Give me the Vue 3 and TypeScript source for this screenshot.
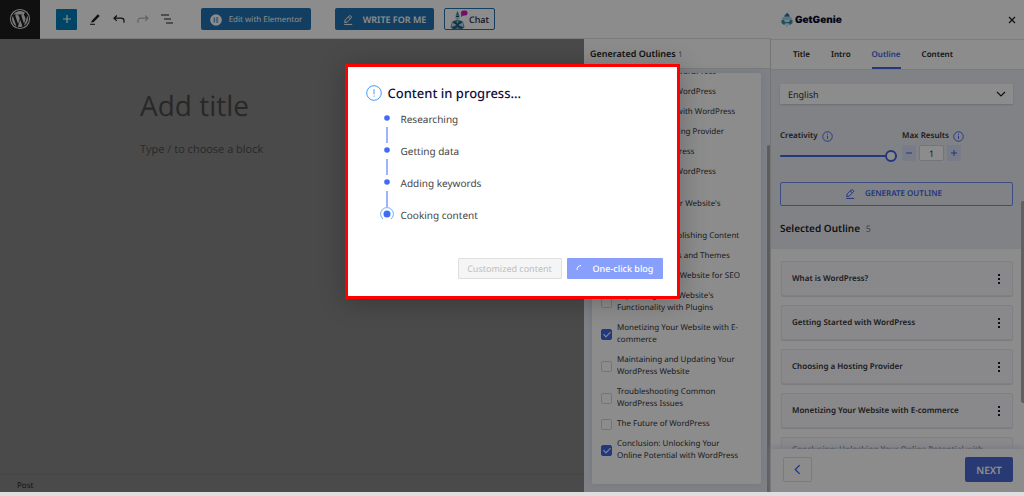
<script setup lang="ts">
import { ref } from 'vue'

interface Outline {
  text: string
  checked: boolean
}

const outlines = ref<Outline[]>([
  { text: 'Introduction to WordPress', checked: false },
  { text: 'Understanding WordPress', checked: true },
  { text: 'Getting Started with WordPress', checked: true },
  { text: 'Choosing a Hosting Provider', checked: true },
  { text: 'Installing WordPress', checked: false },
  { text: 'Understanding WordPress Dashboard', checked: false },
  { text: "Customizing Your Website's Appearance", checked: false },
  { text: 'Creating and Publishing Content', checked: false },
  { text: 'Installing Plugins and Themes', checked: false },
  { text: 'Optimizing Your Website for SEO', checked: false },
  { text: "Expanding Your Website's Functionality with Plugins", checked: false },
  { text: 'Monetizing Your Website with E-commerce', checked: true },
  { text: 'Maintaining and Updating Your WordPress Website', checked: false },
  { text: 'Troubleshooting Common WordPress Issues', checked: false },
  { text: 'The Future of WordPress', checked: false },
  { text: 'Conclusion: Unlocking Your Online Potential with WordPress', checked: true },
])

const selected: string[] = [
  'What is WordPress?',
  'Getting Started with WordPress',
  'Choosing a Hosting Provider',
  'Monetizing Your Website with E-commerce',
  'Conclusion: Unlocking Your Online Potential with WordPress',
]

const tabs: string[] = ['Title', 'Intro', 'Outline', 'Content']
const activeTab = ref('Outline')
const steps: string[] = ['Researching', 'Getting data', 'Adding keywords', 'Cooking content']
const creativity = ref(100)
const maxResults = ref(1)
</script>

<template>
  <div class="app">
    <div class="stage">
      <div class="workspace">
        <header class="topbar">
          <a class="wp" href="#" aria-label="WordPress">
            <svg viewBox="0 0 24 24" width="22" height="22" fill="#dcdcdc">
              <path d="M12 1a11 11 0 1 0 0 22 11 11 0 0 0 0-22zm0 1.2a9.8 9.8 0 1 1 0 19.6 9.8 9.8 0 0 1 0-19.6z" />
              <path d="M3.300 12c0 3.400 2 6.400 4.900 7.800L4.100 8.400A8.700 8.700 0 0 0 3.300 12zm14.600-.4c0-1.100-.4-1.800-.7-2.400-.5-.7-.9-1.300-.9-2.100 0-.8.6-1.600 1.500-1.600h.1A8.700 8.700 0 0 0 4.700 7.200h.6c.9 0 2.300-.1 2.300-.1.500 0 .5.700.1.700 0 0-.5.1-1 .1l3.200 9.500 1.900-5.800L10.400 7.900c-.5 0-.9-.1-.9-.1-.5 0-.4-.7 0-.7 0 0 1.500.1 2.300.1.900 0 2.300-.1 2.300-.1.500 0 .5.700.1.700 0 0-.5.1-1 .1l3.200 9.400.9-2.900c.4-1.200.6-2.100.6-2.800zm-5.700 1.200-2.600 7.600a8.700 8.700 0 0 0 5.300-.1l-.1-.1zm7.500-4.900c.1 1.200-.1 2.300-.6 3.600l-2.700 7.900A8.700 8.700 0 0 0 19.700 7.900z" />
            </svg>
          </a>
          <div class="tools">
            <button class="add" aria-label="Add block">
              <svg viewBox="0 0 12 12" width="12" height="12" stroke="#fff" stroke-width="1.200"><path d="M6 2v8M2 6h8" /></svg>
            </button>
            <button class="tool" aria-label="Edit">
              <svg viewBox="0 0 12 12" width="12" height="12"><path d="M2.800 7.800 8.800 1.200 10.700 2.900 4.800 9 2 9.700z" fill="#1e1e1e" /><path d="M1 11.300h5" stroke="#1e1e1e" stroke-width="1" /></svg>
            </button>
            <button class="tool" aria-label="Undo">
              <svg viewBox="0 0 12 12" width="12" height="12" fill="none" stroke="#1e1e1e" stroke-width="1.200"><path d="M3.800 2.500 1 5.200l2.800 2.700M1.200 5.200H8c2 0 3 1 3 2.500v2" /></svg>
            </button>
            <button class="tool" aria-label="Redo">
              <svg viewBox="0 0 12 12" width="12" height="12" fill="none" stroke="#b4b4b4" stroke-width="1.200"><path d="M8.200 2.500 11 5.200 8.200 7.900M10.800 5.200H4c-2 0-3 1-3 2.500v2" /></svg>
            </button>
            <button class="tool" aria-label="List view">
              <svg viewBox="0 0 12 12" width="12" height="12" stroke="#1e1e1e" stroke-width="1.200"><path d="M0 2h8M3 6h7M5 10h7" /></svg>
            </button>
          </div>
          <button class="blue elementor">
            <svg viewBox="0 0 12 12" width="12" height="12"><circle cx="6" cy="6" r="5.800" fill="#fff" /><path d="M4.200 3.500v5M5.800 4h2.500M5.800 6h2.500M5.800 8h2.500" stroke="#2271b1" stroke-width="1" /></svg>
            Edit with Elementor
          </button>
          <button class="blue write">
            <svg viewBox="0 0 12 12" width="10" height="10" fill="none" stroke="#fff" stroke-width="1.200"><path d="M2.500 6 7.500 1.200a1.200 1.200 0 0 1 1.800 0l.6.600a1.200 1.200 0 0 1 0 1.800L5 8.500 2 9zM1.500 11.300h9.500M6.500 2.300l2.300 2.400" /></svg>
            WRITE FOR ME
          </button>
          <button class="chat">
            <svg viewBox="0 0 18 20" width="18" height="20">
              <path d="M5.800 5.500 7.500.800 9.300 5.500 9 8H6z" fill="#3c86a3" />
              <path d="M5.500 5.500h4v3.500l-2 1.500-2-1.500z" fill="#a5cfdd" />
              <path d="M6 6.500h3" stroke="#184e6c" />
              <path d="M2 12c2-2.500 9-2.500 11 0l1.500 5c-2 3-12 3-14 0z" fill="#347999" />
              <path d="m2 12.500 4.500 2.500L1.500 17zm11 0L8.500 15l5 2z" fill="#c6e0e8" />
              <path d="M4 11 7.500 15.500 11 11M2.500 18.500l5-2.500 5 2.500" stroke="#154d6c" fill="none" />
              <path d="m6.500 11.500 1 1.500 1-1.500zM6 18.500l1.500-1 1.500 1z" fill="#e2f1f5" />
              <rect x="11" y=".5" width="6.500" height="5" rx="2.300" fill="#d717bd" />
              <path d="m11.500 3.500-.5 3.500 3-2z" fill="#d717bd" />
            </svg>
            Chat
          </button>
        </header>

        <div class="middle">
          <main class="canvas">
            <div class="post">
              <input class="title" aria-label="Add title" placeholder="Add title">
              <input class="block" aria-label="Block" placeholder="Type / to choose a block">
            </div>
            <footer class="crumb">Post</footer>
          </main>
          <section class="generated">
            <h2 class="gen-head">Generated Outlines <small>1</small></h2>
            <div class="gen-body">
              <ul class="gen-list">
                <li v-for="(o, i) in outlines" :key="i">
                  <input :id="`o${i}`" v-model="o.checked" type="checkbox" class="check">
                  <label :for="`o${i}`">{{ o.text }}</label>
                </li>
              </ul>
              <div class="gen-scroll"></div>
            </div>
          </section>
        </div>
      </div>

      <aside class="panel">
        <header class="panel-head">
          <div class="brand">
            <svg viewBox="0 0 12 16" width="12" height="16">
              <path d="M3.500 5C3 2.500 5 3 6 .5 7 2 9 2 8.500 5z" fill="#247ca3" />
              <path d="M1 6c2-2 8-2 10 0l-.5 2h-9z" fill="#a6d6e6" />
              <path d="M.5 8h11v3L9 13H3L.5 11z" fill="#3b8cae" />
              <path d="M3 8h6l-1 2H4zM3 12l3-1 3 1-3 3.500z" fill="#d8eef4" />
            </svg>
            <strong>GetGenie</strong>
          </div>
          <button class="close" aria-label="Close">
            <svg viewBox="0 0 8 8" width="8" height="8" stroke="#1e1e1e" stroke-width="1.200"><path d="m1 1 6 6M7 1 1 7" /></svg>
          </button>
        </header>
        <nav class="tabs">
          <button v-for="t in tabs" :key="t" :class="{ active: t === activeTab }" @click="activeTab = t">{{ t }}</button>
        </nav>
        <div class="panel-body">
          <div class="settings">
            <div class="select-wrap">
              <select aria-label="Language" class="language"><option>English</option></select>
              <svg viewBox="0 0 10 6" width="10" height="6" fill="none" stroke="#222" stroke-width="1.200"><path d="m1 1 4 4 4-4" /></svg>
            </div>
            <div class="controls">
              <div class="creativity">
                <div class="label">
                  <label for="creativity">Creativity</label>
                  <svg viewBox="0 0 12 12" width="11" height="11" fill="none" stroke="#3f63e8"><circle cx="6" cy="6" r="5.200" /><path d="M6 5.200v3.500M6 3v1.200" /></svg>
                </div>
                <input id="creativity" v-model="creativity" class="range" type="range" min="0" max="100">
              </div>
              <div class="results">
                <div class="label">
                  <label for="results">Max Results</label>
                  <svg viewBox="0 0 12 12" width="11" height="11" fill="none" stroke="#3f63e8"><circle cx="6" cy="6" r="5.200" /><path d="M6 5.200v3.500M6 3v1.200" /></svg>
                </div>
                <div class="stepper">
                  <button aria-label="Fewer" @click="maxResults--"><svg viewBox="0 0 8 8" width="8" height="8" stroke="#3f63e8"><path d="M1 4h6" /></svg></button>
                  <input id="results" v-model="maxResults" type="text">
                  <button aria-label="More" @click="maxResults++"><svg viewBox="0 0 8 8" width="8" height="8" stroke="#3f63e8"><path d="M1 4h6M4 1v6" /></svg></button>
                </div>
              </div>
            </div>
            <button class="generate">
              <svg viewBox="0 0 12 12" width="10" height="10" fill="none" stroke="#3f63e8" stroke-width="1.200"><path d="M2.500 6 7.500 1.200a1.200 1.200 0 0 1 1.800 0l.6.600a1.200 1.200 0 0 1 0 1.800L5 8.500 2 9zM1.500 11.300h9.500M6.500 2.300l2.300 2.400" /></svg>
              GENERATE OUTLINE
            </button>
            <h2 class="sel-head">Selected Outline <small>5</small></h2>
          </div>
          <ul class="cards">
            <li v-for="s in selected" :key="s">
              <span>{{ s }}</span>
              <button aria-label="Options"><svg viewBox="0 0 4 12" width="4" height="12" fill="#1c1c2c"><path d="M1 1h2v2H1zM1 5h2v2H1zM1 9h2v2H1z" /></svg></button>
            </li>
          </ul>
          <div class="panel-scroll"></div>
        </div>
        <footer class="panel-foot">
          <button class="prev" aria-label="Back">
            <svg viewBox="0 0 8 12" width="7" height="11" fill="none" stroke="#3f63e8" stroke-width="1.500"><path d="M6.500 1 1.500 6l5 5" /></svg>
          </button>
          <button class="next">NEXT</button>
        </footer>
      </aside>

      <div class="overlay">
        <div class="modal" role="dialog" aria-labelledby="modal-title">
          <div class="modal-head">
            <svg viewBox="0 0 16 16" width="16" height="16" fill="none" stroke="#409bff"><circle cx="8" cy="8" r="7.300" /><path d="M8 4.200v5M8 10.500v1.200" /></svg>
            <h2 id="modal-title">Content in progress...</h2>
          </div>
          <ol class="steps">
            <li v-for="(s, i) in steps" :key="s">
              <svg v-if="i < steps.length - 1" viewBox="0 0 14 32" width="14" height="32"><circle cx="7" cy="7" r="2.800" fill="#3f6bf5" /><path d="M7 16v16" stroke="#7d9bf8" stroke-width="1.500" /></svg>
              <svg v-else viewBox="0 0 14 32" width="14" height="32"><circle cx="7" cy="7" r="3.500" fill="#3f6bf5" /><path d="M3 12a6.400 6.400 0 1 1 8 0" fill="none" stroke="#69b1ff" /></svg>
              <span>{{ s }}</span>
            </li>
          </ol>
          <div class="actions">
            <button class="custom" disabled>Customized content</button>
            <button class="one">
              <svg viewBox="0 0 10 10" width="10" height="10" fill="none" stroke="#fff"><path d="M1 6a4.500 4.500 0 0 1 4-4.500" /></svg>
              One-click blog
            </button>
          </div>
        </div>
      </div>
    </div>
    <div class="strip"></div>
  </div>
</template>

<style>
body { margin: 0; }
</style>

<style scoped>
.app { height: 100vh; display: flex; flex-direction: column; overflow: hidden; font: 8px/12px "Noto Sans", "Open Sans", sans-serif; text-rendering: geometricPrecision; color: #333; }
.app *, .app *::before { box-sizing: border-box; }
button, input, select { font: inherit; color: inherit; margin: 0; padding: 0; border: 0; background: none; text-rendering: inherit; }
button { display: flex; align-items: center; justify-content: center; }
h2, ul, ol { margin: 0; padding: 0; list-style: none; }
svg { flex: none; display: block; }

.stage { flex: 1; min-height: 0; display: flex; position: relative; }
.strip { flex: none; height: 4px; background: #dedede; }
.workspace { flex: 1; min-width: 0; display: flex; flex-direction: column; }
.topbar { height: 39px; flex: none; display: flex; align-items: center; background: #fff; border-bottom: 1px solid #e0e0e0; }
.wp { width: 40px; height: 39px; display: flex; align-items: center; justify-content: center; background: #1e1e1e; }
.tools { display: flex; gap: 12px; align-items: center; margin: 0 28px 0 16px; }
.add { width: 21px; height: 21px; border-radius: 1px; background: #007cba; }
.tool { width: 12px; height: 22px; }
.blue { height: 22px; border-radius: 2px; background: #2271b1; color: #fff; }
.elementor { width: 110px; gap: 7px; padding-top: 1px; }
.write { width: 99px; gap: 10px; margin-left: 24px; padding-top: 1px; font-size: 9px; font-weight: 600; }
.chat { width: 51px; height: 22px; gap: 1px; margin-left: 10px; padding-top: 1px; border: 1px solid #2271b1; border-radius: 2px; color: #1e1e3c; font-size: 9px; font-weight: 500; }

.middle { flex: 1; min-height: 0; display: flex; }
.canvas { flex: 1; min-width: 0; display: flex; flex-direction: column; background: #888; }
.post { flex: 1; display: flex; flex-direction: column; align-items: flex-start; padding: 46px 0 0 140px; }
.post input { width: 200px; font-family: "Open Sans", "Noto Sans", sans-serif; }
.post input::placeholder { color: #4a4a4a; opacity: 1; }
.title { height: 42px; font-size: 28px; }
.block { height: 18px; margin-top: 13px; font-size: 11px; }
.crumb { height: 18px; flex: none; padding: 5px 17px 0; border-top: 1px solid #808080; color: #222; }

.generated { width: 187px; flex: none; display: flex; flex-direction: column; background: #e9ebf4; border-right: 1px solid #d5d5d8; }
.gen-head { height: 30px; flex: none; padding: 9px 6px; background: #fff; border-bottom: 1px solid #dcdcdc; font-size: 9px; line-height: 12px; font-weight: 600; color: #222; }
.gen-head small { font-size: 8px; font-weight: 400; color: #777; }
.gen-body { flex: 1; min-height: 0; display: flex; padding: 4px 0 0 8px; }
.gen-list { flex: 1; min-width: 0; margin-bottom: 8px; padding: 0 16px 22px 9px; display: flex; flex-direction: column; justify-content: flex-end; gap: 8px; overflow: hidden; background: #fff; border-radius: 2px; box-shadow: 0 0 8px #d4d8e8; }
.gen-list li { flex: none; display: flex; align-items: center; gap: 5px; }
.gen-scroll { width: 3px; margin: 72px 0 0 6px; border-radius: 2px; background: #a9a9a9; }
.check { appearance: none; flex: none; width: 11px; height: 11px; border: 1px solid #d5d5d5; border-radius: 2px; display: flex; justify-content: center; }
.check:checked { background: #4064e6; border-color: #4064e6; }
.check:checked::before { content: ""; width: 4px; height: 7px; border: solid #fff; border-width: 0 1px 1px 0; transform: rotate(45deg); }

.panel { width: 253px; flex: none; display: flex; flex-direction: column; background: #fff; }
.panel-head { height: 40px; flex: none; display: flex; align-items: center; justify-content: space-between; padding: 0 8px 0 10px; border-bottom: 1px solid #e4e4e4; }
.brand { display: flex; align-items: center; gap: 2px; font: 700 10px/16px Inter, sans-serif; color: #0c0c30; }
.tabs { height: 30px; flex: none; display: flex; gap: 21px; padding-left: 22px; border-bottom: 1px solid #e0e0e6; font-weight: 600; color: #1e1e1e; }
.tabs button { padding-top: 2px; border-bottom: 2px solid transparent; }
.tabs .active { color: #4064e6; border-color: #4064e6; }
.panel-body { flex: 1; min-height: 0; position: relative; overflow: hidden; }
.settings { padding: 14px 11px 12px 9px; background: #ecedf5; }
.select-wrap { display: flex; align-items: center; height: 20px; padding-right: 7px; background: #fff; border-radius: 1px; box-shadow: 0 1px 2px #c4c6d0; }
.language { flex: 1; appearance: none; height: 20px; padding: 1px 0 0 8px; font-size: 9px; }
.controls { display: flex; gap: 4px; margin-top: 26px; }
.creativity { width: 118px; }
.label { height: 12px; display: flex; align-items: center; gap: 4px; font-weight: 600; }
.range { appearance: none; display: block; width: 117px; height: 12px; margin-top: 8px; }
.range::-webkit-slider-runnable-track { height: 2px; background: #4064e6; border-radius: 1px; }
.range::-webkit-slider-thumb { appearance: none; width: 12px; height: 12px; margin-top: -5px; border: 2px solid #4064e6; border-radius: 50%; background: #fff; }
.stepper { display: flex; gap: 3px; margin-top: 3px; }
.stepper button { width: 14px; height: 16px; background: #dbe2fa; border-radius: 1px; }
.stepper input { width: 25px; height: 16px; background: #fff; border: 1px solid #d4d5dc; border-radius: 2px; text-align: center; font-size: 9px; }
.generate { width: 100%; height: 24px; margin-top: 20px; padding-right: 6px; gap: 10px; border: 1px solid #6f8df0; border-radius: 2px; color: #4064e6; font-weight: 600; }
.sel-head { margin-top: 14px; font-size: 10px; line-height: 16px; font-weight: 600; color: #1e1e1e; }
.sel-head small { margin-left: 3px; font-size: 9px; font-weight: 400; color: #777; }
.cards { padding: 12px 11px 0 10px; display: flex; flex-direction: column; gap: 9px; }
.cards li { min-height: 35px; display: flex; align-items: center; justify-content: space-between; padding: 6px 11px 5px 10px; background: #f9f9fe; border: 1px solid #e9e9f0; border-radius: 2px; box-shadow: 0 1px 1px #e2e2ea; font-weight: 600; }
.panel-scroll { position: absolute; right: 0; top: 131px; width: 3px; height: 202px; background: #b0b0b0; border-radius: 2px 0 0 2px; }
.panel-foot { height: 43px; flex: none; display: flex; align-items: flex-start; justify-content: space-between; padding: 8px 11px 0 12px; position: relative; background: #fff; box-shadow: 0 -2px 6px #dfe3f3; }
.prev { width: 29px; height: 25px; border: 1px solid #e0e0e0; border-radius: 2px; }
.next { width: 48px; height: 25px; border-radius: 2px; background: #4a68d4; color: #fff; font-size: 10px; font-weight: 600; }

.overlay { position: absolute; inset: 0; display: flex; justify-content: center; align-items: flex-start; padding-top: 64px; background: rgba(0, 0, 0, 0.45); }
.modal { width: 335px; padding: 17px 14px 17px 18px; border: 3px solid #f00; background: #fff; box-shadow: 0 3px 24px rgba(0, 0, 0, 0.25); }
.modal-head { display: flex; align-items: center; gap: 6px; height: 18px; }
.modal-head h2 { font-size: 13px; line-height: 18px; font-weight: 500; color: #10123c; }
.steps { margin: 9px 0 0 14px; }
.steps li { display: flex; gap: 7px; height: 32px; font-size: 10px; line-height: 16px; color: #444; }
.actions { display: flex; justify-content: flex-end; gap: 5px; margin-top: 19px; font-size: 9px; }
.actions button { height: 21px; border-radius: 1px; }
.custom { width: 104px; border: 1px solid #dedede; background: #f5f5f5; color: #bdbdbd; }
.one { width: 96px; gap: 7px; background: #889ffb; color: #fff; font-weight: 500; }
</style>
